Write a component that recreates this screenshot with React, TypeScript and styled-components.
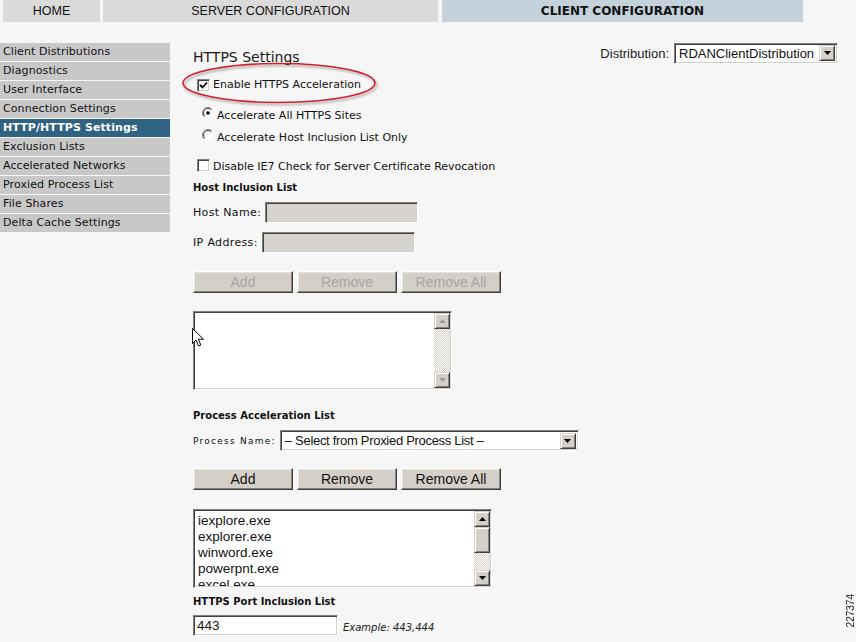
import React from "react";
import styled, { createGlobalStyle } from "styled-components";

const Global = createGlobalStyle`
  html, body { margin: 0; padding: 0; background: #f6f6f6; }
  body { font-family: "DejaVu Sans", Verdana, sans-serif; color: #000; }
`;

const Page = styled.div`
  position: relative;
  width: 856px;
  height: 642px;
  overflow: hidden;
  background: #f6f6f6;
`;

const TabBar = styled.div`
  display: flex;
  height: 22px;
  padding-left: 3px;
`;

const Tab = styled.div<{ $w: number; $active?: boolean; $gap: number }>`
  width: ${(p) => p.$w}px;
  margin-right: ${(p) => p.$gap}px;
  background: ${(p) => (p.$active ? "#c3d2db" : "#dadada")};
  display: flex;
  align-items: center;
  justify-content: center;
  font-family: ${(p) => (p.$active ? '"DejaVu Sans", Verdana, sans-serif' : '"Liberation Sans", Arial, sans-serif')};
  font-size: ${(p) => (p.$active ? "12px" : "12.5px")};
  font-weight: ${(p) => (p.$active ? 700 : 400)};
  color: #111;
`;

const Body = styled.div`
  display: flex;
  margin-top: 21px;
`;

const Sidebar = styled.nav`
  width: 170px;
  display: flex;
  flex-direction: column;
  gap: 1px;
`;

const NavItem = styled.div<{ $active?: boolean }>`
  height: 18px;
  line-height: 18px;
  padding-left: 3px;
  font-size: 11px;
  letter-spacing: 0.1px;
  background: ${(p) => (p.$active ? "#2f6283" : "#c8c8c8")};
  color: ${(p) => (p.$active ? "#fff" : "#111")};
  font-weight: ${(p) => (p.$active ? 700 : 400)};
  white-space: nowrap;
`;

const Main = styled.main`
  position: relative;
  flex: 1;
  padding-left: 23px;
  padding-right: 18px;
  display: flex;
  flex-direction: column;
  align-items: flex-start;
`;

const HeaderRow = styled.div`
  align-self: stretch;
  display: flex;
  justify-content: space-between;
  height: 20px;
`;

const Heading = styled.h1`
  margin: 0;
  padding-top: 4px;
  font-size: 14px;
  font-weight: 400;
  line-height: 20px;
  color: #1a1a1a;
`;

const DistGroup = styled.div`
  display: flex;
  align-items: center;
  gap: 5px;
  font-family: "Liberation Sans", Arial, sans-serif;
  font-size: 13px;
  color: #222;
`;

const SelectBox = styled.div<{ $w: number }>`
  width: ${(p) => p.$w}px;
  height: 21px;
  box-sizing: border-box;
  display: flex;
  align-items: center;
  background: #fff;
  border-top: 1px solid #808080;
  border-left: 1px solid #808080;
  border-right: 1px solid #fff;
  border-bottom: 1px solid #fff;
  box-shadow: inset 1px 1px #404040, inset -1px -1px #d4d0c8;
  padding: 2px;
  font-family: "Liberation Sans", Arial, sans-serif;
  font-size: 13px;
  color: #111;
`;

const SelectText = styled.span<{ $tight?: boolean }>`
  flex: 1;
  padding-left: 2px;
  letter-spacing: ${(p) => (p.$tight ? "-0.3px" : "0")};
  white-space: nowrap;
  overflow: hidden;
`;

const ScrollBtn = styled.div`
  width: 16px;
  height: 16px;
  flex: none;
  box-sizing: border-box;
  background: #d4d0c8;
  border: 1px solid;
  border-color: #d4d0c8 #404040 #404040 #d4d0c8;
  box-shadow: inset 1px 1px #fff, inset -1px -1px #808080;
  display: flex;
  align-items: center;
  justify-content: center;
`;

const OptionRow = styled.div<{ $mt: number; $pl: number }>`
  margin-top: ${(p) => p.$mt}px;
  padding-left: ${(p) => p.$pl}px;
  height: 16px;
  display: flex;
  align-items: flex-start;
  gap: 3px;
  font-size: 11px;
  line-height: 16px;
  color: #111;
  white-space: nowrap;
`;

const CheckBox = styled.span<{ $mt: number }>`
  margin-top: ${(p) => p.$mt}px;
  width: 13px;
  height: 13px;
  flex: none;
  box-sizing: border-box;
  background: #fff;
  border-top: 1px solid #808080;
  border-left: 1px solid #808080;
  border-right: 1px solid #fff;
  border-bottom: 1px solid #fff;
  box-shadow: inset 1px 1px #404040, inset -1px -1px #d4d0c8;
  display: flex;
  align-items: center;
  justify-content: center;
`;

const RadioWrap = styled.span`
  margin-top: -1px;
  width: 12px;
  height: 12px;
  flex: none;
  display: flex;
`;

const SectionLabel = styled.div<{ $mt: number }>`
  margin-top: ${(p) => p.$mt}px;
  height: 14px;
  line-height: 14px;
  font-family: "DejaVu Sans", Verdana, sans-serif;
  font-size: 10px;
  font-weight: 700;
  color: #111;
`;

const FieldRow = styled.div<{ $mt: number }>`
  margin-top: ${(p) => p.$mt}px;
  display: flex;
  align-items: center;
  gap: 4px;
`;

const FieldLabel = styled.span<{ $small?: boolean }>`
  font-size: ${(p) => (p.$small ? "9px" : "11px")};
  letter-spacing: ${(p) => (p.$small ? "1.25px" : "0.35px")};
  color: #111;
  white-space: nowrap;
`;

const TextInput = styled.div<{ $w: number; $disabled?: boolean }>`
  width: ${(p) => p.$w}px;
  height: 21px;
  box-sizing: border-box;
  background: ${(p) => (p.$disabled ? "#d6d3ce" : "#fff")};
  border-top: 1px solid #808080;
  border-left: 1px solid #808080;
  border-right: 1px solid #fff;
  border-bottom: 1px solid #fff;
  box-shadow: inset 1px 1px #404040, inset -1px -1px #d4d0c8;
  padding: 2px 3px;
  font-family: "Liberation Sans", Arial, sans-serif;
  font-size: 13.5px;
  line-height: 16px;
  color: #111;
`;

const ButtonRow = styled.div<{ $mt: number }>`
  margin-top: ${(p) => p.$mt}px;
  display: flex;
  gap: 4px;
`;

const Button = styled.button<{ $disabled?: boolean }>`
  width: 100px;
  height: 22px;
  box-sizing: border-box;
  margin: 0;
  padding: 0;
  background: #d4d0c8;
  border: 1px solid;
  border-color: #fff #404040 #404040 #fff;
  box-shadow: inset -1px -1px #808080, inset 1px 1px #e4e2dc;
  font-family: "Liberation Sans", Arial, sans-serif;
  font-size: 14px;
  color: ${(p) => (p.$disabled ? "#a4a4a4" : "#111")};
`;

const ListBox = styled.div<{ $mt: number; $w: number }>`
  margin-top: ${(p) => p.$mt}px;
  width: ${(p) => p.$w}px;
  height: 79px;
  box-sizing: border-box;
  display: flex;
  background: #fff;
  border-top: 1px solid #808080;
  border-left: 1px solid #808080;
  border-right: 1px solid #fff;
  border-bottom: 1px solid #fff;
  box-shadow: inset 1px 1px #404040, inset -1px -1px #d4d0c8;
  padding: 1px;
`;

const ListItems = styled.div`
  flex: 1;
  overflow: hidden;
  padding: 2px 0 0 3px;
  font-family: "Liberation Sans", Arial, sans-serif;
  font-size: 13.5px;
  line-height: 16px;
  color: #111;
`;

const ScrollBar = styled.div`
  width: 16px;
  display: flex;
  flex-direction: column;
`;

const Track = styled.div`
  flex: 1;
  background: repeating-conic-gradient(#fff 0 25%, #d4d0c8 0 50%) 0 0 / 2px 2px;
`;

const Thumb = styled.div`
  height: 26px;
  box-sizing: border-box;
  background: #d4d0c8;
  border: 1px solid;
  border-color: #d4d0c8 #404040 #404040 #d4d0c8;
  box-shadow: inset 1px 1px #fff, inset -1px -1px #808080;
`;

const PortRow = styled.div<{ $mt: number }>`
  margin-top: ${(p) => p.$mt}px;
  display: flex;
  align-items: center;
  gap: 5px;
`;

const Hint = styled.span`
  font-size: 10px;
  font-style: italic;
  color: #222;
  padding-top: 3px;
`;

const Ellipse = styled.svg`
  position: absolute;
  left: 11px;
  top: 18px;
  overflow: visible;
  pointer-events: none;
`;

const Cursor = styled.svg`
  position: absolute;
  left: 22px;
  top: 285px;
  pointer-events: none;
`;

const FigureId = styled.div`
  position: absolute;
  left: 845px;
  top: 594px;
  writing-mode: vertical-rl;
  transform: rotate(180deg);
  font-family: "Liberation Sans", Arial, sans-serif;
  font-size: 10px;
  color: #222;
`;

const Arrow = ({ dir, disabled }: { dir: "up" | "down"; disabled?: boolean }) => (
  <svg width="7" height="4" viewBox="0 0 7 4">
    <polygon
      points={dir === "up" ? "3.5,0 7,4 0,4" : "0,0 7,0 3.5,4"}
      fill={disabled ? "#9a9a9a" : "#000"}
    />
  </svg>
);

const Check = () => (
  <svg width="9" height="9" viewBox="0 0 9 9">
    <path d="M1 4 L3.5 6.5 L8 1.5" stroke="#000" strokeWidth="1.8" fill="none" />
  </svg>
);

const Radio = ({ on }: { on?: boolean }) => (
  <svg width="12" height="12" viewBox="0 0 12 12">
    <circle cx="6" cy="6" r="5.5" fill="#fff" />
    <path d="M9.9 2.1 A5.5 5.5 0 0 0 2.1 9.9" stroke="#808080" fill="none" />
    <path d="M9.9 2.1 A5.5 5.5 0 0 1 2.1 9.9" stroke="#f4f4f4" fill="none" />
    <path d="M9.2 2.8 A4.5 4.5 0 0 0 2.8 9.2" stroke="#404040" fill="none" />
    {on && <circle cx="6" cy="6" r="1.8" fill="#000" />}
  </svg>
);

const navItems = [
  "Client Distributions",
  "Diagnostics",
  "User Interface",
  "Connection Settings",
  "HTTP/HTTPS Settings",
  "Exclusion Lists",
  "Accelerated Networks",
  "Proxied Process List",
  "File Shares",
  "Delta Cache Settings",
];

const processes = ["iexplore.exe", "explorer.exe", "winword.exe", "powerpnt.exe", "excel.exe"];

export default function App() {
  return (
    <Page>
      <Global />
      <TabBar>
        <Tab $w={97} $gap={3}>HOME</Tab>
        <Tab $w={335} $gap={4}>SERVER CONFIGURATION</Tab>
        <Tab $w={361} $gap={0} $active>CLIENT CONFIGURATION</Tab>
      </TabBar>
      <Body>
        <Sidebar>
          {navItems.map((n) => (
            <NavItem key={n} $active={n === "HTTP/HTTPS Settings"}>{n}</NavItem>
          ))}
        </Sidebar>
        <Main>
          <HeaderRow>
            <Heading>HTTPS Settings</Heading>
            <DistGroup>
              <span>Distribution:</span>
              <SelectBox $w={164}>
                <SelectText>RDANClientDistribution</SelectText>
                <ScrollBtn><Arrow dir="down" /></ScrollBtn>
              </SelectBox>
            </DistGroup>
          </HeaderRow>

          <OptionRow $mt={14} $pl={4}>
            <CheckBox $mt={2}><Check /></CheckBox>
            <span>Enable HTTPS Acceleration</span>
          </OptionRow>
          <OptionRow $mt={15} $pl={9}>
            <RadioWrap><Radio on /></RadioWrap>
            <span>Accelerate All HTTPS Sites</span>
          </OptionRow>
          <OptionRow $mt={6} $pl={9}>
            <RadioWrap><Radio /></RadioWrap>
            <span>Accelerate Host Inclusion List Only</span>
          </OptionRow>
          <OptionRow $mt={13} $pl={4}>
            <CheckBox $mt={0} />
            <span>Disable IE7 Check for Server Certificate Revocation</span>
          </OptionRow>

          <SectionLabel $mt={6}>Host Inclusion List</SectionLabel>
          <FieldRow $mt={7}>
            <FieldLabel>Host Name:</FieldLabel>
            <TextInput $w={153} $disabled />
          </FieldRow>
          <FieldRow $mt={9}>
            <FieldLabel>IP Address:</FieldLabel>
            <TextInput $w={153} $disabled />
          </FieldRow>
          <ButtonRow $mt={18}>
            <Button $disabled>Add</Button>
            <Button $disabled>Remove</Button>
            <Button $disabled>Remove All</Button>
          </ButtonRow>
          <ListBox $mt={18} $w={259}>
            <ListItems />
            <ScrollBar>
              <ScrollBtn><Arrow dir="up" disabled /></ScrollBtn>
              <Track />
              <ScrollBtn><Arrow dir="down" disabled /></ScrollBtn>
            </ScrollBar>
          </ListBox>

          <SectionLabel $mt={19}>Process Acceleration List</SectionLabel>
          <FieldRow $mt={7}>
            <FieldLabel $small>Process Name:</FieldLabel>
            <SelectBox $w={299}>
              <SelectText $tight>– Select from Proxied Process List –</SelectText>
              <ScrollBtn><Arrow dir="down" /></ScrollBtn>
            </SelectBox>
          </FieldRow>
          <ButtonRow $mt={17}>
            <Button>Add</Button>
            <Button>Remove</Button>
            <Button>Remove All</Button>
          </ButtonRow>
          <ListBox $mt={19} $w={299}>
            <ListItems>
              {processes.map((p) => (
                <div key={p}>{p}</div>
              ))}
            </ListItems>
            <ScrollBar>
              <ScrollBtn><Arrow dir="up" /></ScrollBtn>
              <Thumb />
              <Track />
              <ScrollBtn><Arrow dir="down" /></ScrollBtn>
            </ScrollBar>
          </ListBox>

          <SectionLabel $mt={7}>HTTPS Port Inclusion List</SectionLabel>
          <PortRow $mt={6}>
            <TextInput $w={145}>443</TextInput>
            <Hint>Example: 443,444</Hint>
          </PortRow>

          <Ellipse width="196" height="44" viewBox="0 0 196 44">
            <defs>
              <filter id="sh" x="-10%" y="-30%" width="120%" height="160%">
                <feDropShadow dx="1.5" dy="2" stdDeviation="1.2" floodColor="#000" floodOpacity="0.35" />
              </filter>
            </defs>
            <ellipse cx="98" cy="22" rx="96" ry="19.5" fill="none" stroke="#d0222e" strokeWidth="1.6" filter="url(#sh)" />
          </Ellipse>
          <Cursor width="13" height="20" viewBox="0 0 13 20">
            <path d="M0.5 0.5 L0.5 15.5 L4 12 L6.5 18 L8.8 17 L6.4 11.2 L11.5 11.2 Z" fill="#fff" stroke="#000" strokeWidth="1" strokeLinejoin="miter" />
          </Cursor>
        </Main>
      </Body>
      <FigureId>227374</FigureId>
    </Page>
  );
}
